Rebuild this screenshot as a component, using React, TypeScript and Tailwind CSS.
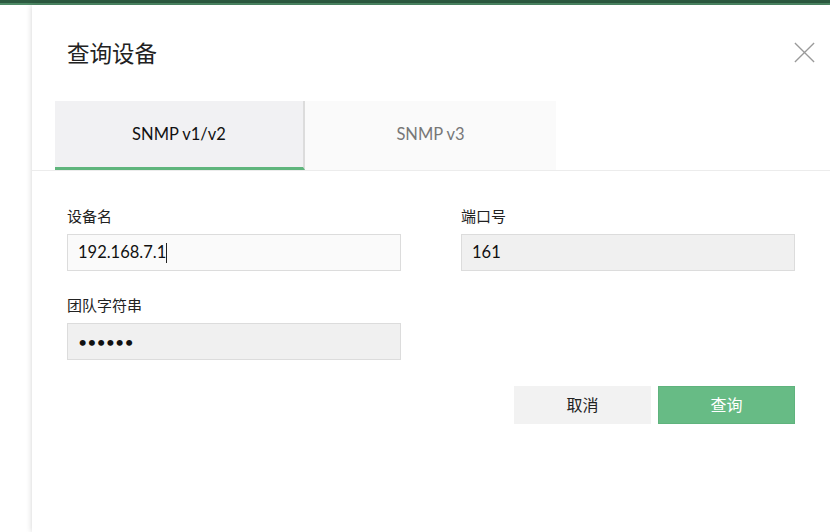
import React from 'react';

const latin = { fontFamily: 'Lato, "Noto Sans CJK SC", sans-serif' };

function CloseIcon() {
  return (
    <svg width="23" height="23" viewBox="0 0 24 24" className="text-[#9a9a9a]">
      <path d="M2 2 L22 22 M22 2 L2 22" stroke="currentColor" strokeWidth="1.4" fill="none" />
    </svg>
  );
}

export default function App() {
  return (
    <div className="w-[830px] h-[532px] bg-white overflow-hidden flex flex-col" style={latin}>
      {/* top strip of the page behind */}
      <div className="h-[3px] bg-[#2c5a40] shrink-0" />
      <div className="h-[2px] bg-[#4e8a66] shrink-0" />

      <div className="flex flex-1 min-h-0">
        <div className="w-[32px] shrink-0" />
        <div className="flex-1 mr-[5px] bg-white shadow-[0_0_6px_rgba(0,0,0,0.18)] flex flex-col">
          {/* header */}
          <div className="flex justify-between items-start pl-[35px] pr-[14px] pt-[33px] h-[96px]">
            <h2 className="text-[22.5px] leading-[32px] text-[#222] font-normal">查询设备</h2>
            <div className="mt-[3px]">
              <CloseIcon />
            </div>
          </div>

          {/* tabs */}
          <div className="border-b border-[#ececec]">
            <div className="flex pl-[23px]">
              <button className="w-[250px] h-[69px] bg-[#f1f1f3] border-r-2 border-[#dcdcdc] border-b-[3px] border-b-[#5fb57c] text-[16.5px] text-[#111]">
                SNMP v1/v2
              </button>
              <button className="w-[251px] h-[69px] bg-[#fafafa] border-b-[3px] border-b-transparent text-[16.5px] text-[#777]">
                SNMP v3
              </button>
            </div>
          </div>

          {/* form */}
          <div className="px-[35px] pt-[34px]">
            <div className="grid grid-cols-2 gap-x-[60px] w-[728px]">
              <div>
                <div className="text-[15px] leading-[22px] text-[#222]">设备名</div>
                <div className="mt-[7px] h-[37px] bg-[#fafafa] border border-[#dcdcdc] flex items-center px-[10px] text-[16.5px] text-[#111]">
                  192.168.7.1<span className="inline-block w-px h-[20px] bg-[#222]" />
                </div>
              </div>
              <div>
                <div className="text-[15px] leading-[22px] text-[#222]">端口号</div>
                <div className="mt-[7px] h-[37px] bg-[#f0f0f0] border border-[#dcdcdc] flex items-center px-[10px] text-[16.5px] text-[#111]">
                  161
                </div>
              </div>
              <div className="mt-[23px]">
                <div className="text-[15px] leading-[22px] text-[#222]">团队字符串</div>
                <div className="mt-[7px] h-[37px] bg-[#f0f0f0] border border-[#dcdcdc] flex items-center px-[10px] text-[16px] text-[#111]">
                  ••••••
                </div>
              </div>
            </div>

            <div className="flex justify-end gap-[7px] mt-[26px] w-[728px]">
              <button className="w-[137px] h-[38px] bg-[#f2f2f2] text-[16px] text-[#222]">取消</button>
              <button className="w-[137px] h-[38px] bg-[#67bb85] border border-[#5fb37d] text-[16px] text-white">查询</button>
            </div>
          </div>
        </div>
      </div>
    </div>
  );
}
